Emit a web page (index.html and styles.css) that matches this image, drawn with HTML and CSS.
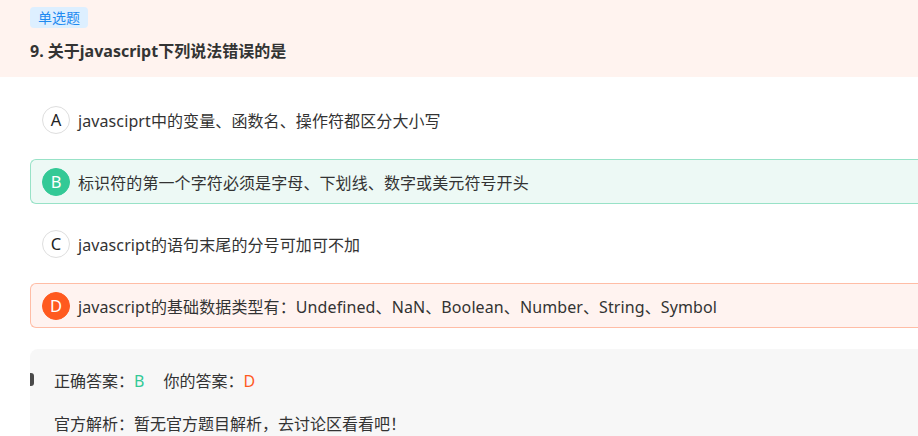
FILE: index.html
```html
<!DOCTYPE html>
<html lang="zh-CN">
<head>
<meta charset="utf-8">
<title>单选题</title>
<link rel="stylesheet" href="styles.css">
</head>
<body>
<header class="q-head">
  <span class="q-tag">单选题</span>
  <h1 class="q-title">9. 关于javascript下列说法错误的是</h1>
</header>
<main class="q-body">
  <ul class="options">
    <li class="option"><span class="opt-key">A</span><span class="opt-text">javasciprt中的变量、函数名、操作符都区分大小写</span></li>
    <li class="option option-right"><span class="opt-key">B</span><span class="opt-text">标识符的第一个字符必须是字母、下划线、数字或美元符号开头</span></li>
    <li class="option"><span class="opt-key">C</span><span class="opt-text">javascript的语句末尾的分号可加可不加</span></li>
    <li class="option option-wrong"><span class="opt-key">D</span><span class="opt-text">javascript的基础数据类型有：Undefined、NaN、Boolean、Number、String、Symbol</span></li>
  </ul>
  <section class="analysis">
    <div class="answer-row">
      <span class="ans-label">正确答案：</span><span class="ans-right">B</span>
      <span class="ans-label ans-gap">你的答案：</span><span class="ans-wrong">D</span>
    </div>
    <p class="explain">官方解析：暂无官方题目解析，去讨论区看看吧！</p>
  </section>
</main>
</body>
</html>
```

FILE: styles.css
```css
html, body {
  margin: 0;
  padding: 0;
  overflow: hidden;
  background: #ffffff;
}
body {
  font-family: "Noto Sans", "Noto Sans CJK SC", sans-serif;
  color: #333333;
  width: 918px;
  height: 436px;
}
.q-head {
  background: #fff3ef;
  height: 77px;
  box-sizing: border-box;
  padding: 7px 30px 0;
}
.q-tag {
  display: block;
  width: fit-content;
  height: 21px;
  line-height: 21px;
  padding: 0 8px;
  font-size: 14px;
  color: #1f8af0;
  background: #ddefff;
  border-radius: 4px;
}
.q-title {
  margin: 11px 0 0;
  font-size: 16px;
  line-height: 24px;
  font-weight: bold;
  color: #333333;
}
.q-body {
  padding: 20px 0 0 30px;
}
.options {
  list-style: none;
  margin: 0;
  padding: 0;
  display: flex;
  flex-direction: column;
  gap: 17px;
}
.option {
  display: flex;
  align-items: center;
  height: 45px;
  box-sizing: border-box;
  padding-left: 12px;
  border: 1px solid transparent;
  border-right: none;
  border-radius: 6px 0 0 6px;
  font-size: 16px;
}
.opt-key {
  width: 28px;
  height: 28px;
  box-sizing: border-box;
  border: 1px solid #dedede;
  border-radius: 50%;
  display: flex;
  align-items: center;
  justify-content: center;
  font-size: 16.5px;
  color: #222;
  background: #fff;
  margin-left: -1px;
  margin-right: 8px;
  flex: none;
}
.opt-text {
  white-space: nowrap;
  letter-spacing: 0.1px;
}
.option-right {
  background: #edf9f5;
  border-color: #98e2c7;
}
.option-right .opt-key {
  background: #33c996;
  border-color: #33c996;
  color: #fff;
}
.option-wrong {
  background: #fff3f0;
  border-color: #ffbda6;
}
.option-wrong .opt-key {
  background: #ff5a1f;
  border-color: #ff5a1f;
  color: #fff;
}
.analysis {
  position: relative;
  margin-top: 21px;
  background: #f7f7f7;
  border-radius: 8px 0 0 0;
  box-sizing: border-box;
  padding: 20px 24px 0;
  height: 87px;
}
.analysis::before {
  content: "";
  position: absolute;
  left: 0;
  top: 24px;
  width: 4px;
  height: 13px;
  background: #4a4a4a;
  border-radius: 0 3px 3px 0;
}
.answer-row {
  font-size: 16px;
  line-height: 24px;
}
.ans-right {
  color: #33c996;
}
.ans-wrong {
  color: #ff5a1f;
}
.ans-gap {
  margin-left: 15px;
}
.explain {
  margin: 19px 0 0;
  font-size: 16px;
  line-height: 24px;
}
```
